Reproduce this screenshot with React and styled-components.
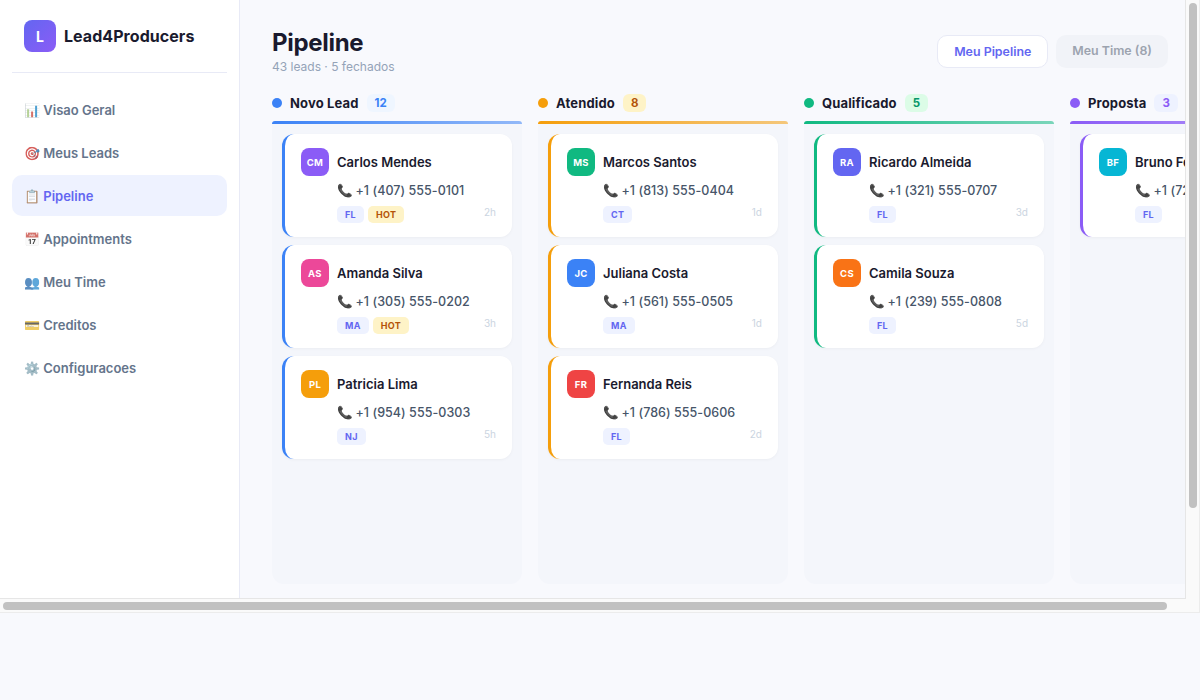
import React from "react";
import styled, { createGlobalStyle } from "styled-components";

const Global = createGlobalStyle`
  html, body { margin: 0; padding: 0; background: #f8f9fd; overflow: hidden; }
  * { box-sizing: border-box; }
  body { font-family: Inter, "Noto Sans", sans-serif; }
`;

const Frame = styled.div`
  width: 1200px;
  height: 613px;
  display: grid;
  grid-template-columns: 1186px 14px;
  grid-template-rows: 599px 14px;
  background: #fafafa;
  border-right: 1px solid #ececec;
  border-bottom: 1px solid #ececec;
`;
const Viewport = styled.div`
  overflow: hidden;
  border-right: 1px solid #e6e6e6;
  border-bottom: 1px solid #e6e6e6;
`;
const VTrack = styled.div`
  padding: 3px 2px 0 3px;
`;
const VThumb = styled.div`
  width: 8px;
  height: 505px;
  border-radius: 4px;
  background: #c1c1c1;
`;
const HTrack = styled.div`
  padding: 3px 0 0 3px;
`;
const HThumb = styled.div`
  width: 1164px;
  height: 8px;
  border-radius: 4px;
  background: #c1c1c1;
`;
const Shell = styled.div`
  display: flex;
  width: 1200px;
  height: 700px;
  background: #f8f9fd;
`;
const Sidebar = styled.aside`
  width: 240px;
  flex: none;
  background: #fff;
  border-right: 1px solid #e8eaf6;
  padding: 20px 12px;
`;
const Brand = styled.div`
  display: flex;
  align-items: center;
  gap: 8px;
  padding: 0 12px 20px;
  border-bottom: 1px solid #e8eaf6;
  margin-bottom: 16px;
`;
const Logo = styled.div`
  width: 32px;
  height: 32px;
  border-radius: 8px;
  background: linear-gradient(135deg, #6366f1, #8b5cf6);
  color: #fff;
  font-size: 14px;
  font-weight: 700;
  display: flex;
  align-items: center;
  justify-content: center;
`;
const BrandName = styled.div`
  font-size: 16px;
  font-weight: 700;
  letter-spacing: 0.05px;
  color: #1a1a2e;
`;
const NavItem = styled.div`
  height: 41px;
  margin-bottom: 2px;
  padding: 0 12px;
  border-radius: 10px;
  display: flex;
  align-items: center;
  font-size: 13px;
  font-weight: 600;
  color: ${p => (p.$active ? "#6366f1" : "#64748b")};
  background: ${p => (p.$active ? "#eef2ff" : "transparent")};
`;
const NavIcon = styled.span`
  white-space: pre;
  filter: saturate(0.7);
  opacity: 0.8;
`;
const Main = styled.main`
  flex: 1;
  min-width: 0;
  overflow: hidden;
  padding: 28px 32px;
`;
const Header = styled.header`
  display: flex;
  justify-content: space-between;
  align-items: flex-start;
  margin-bottom: 20px;
`;
const Title = styled.h1`
  margin: 0;
  font-size: 24px;
  line-height: 29px;
  font-weight: 700;
  letter-spacing: -0.3px;
  color: #1a1a2e;
`;
const Sub = styled.div`
  margin-top: 2px;
  font-size: 12px;
  color: #94a3b8;
`;
const Toggle = styled.div`
  display: flex;
  gap: 8px;
  margin-top: 7px;
`;
const ToggleBtn = styled.div`
  padding: 8px 16px;
  border-radius: 10px;
  font-size: 12.4px;
  line-height: 15px;
  font-weight: 600;
  background: ${p => (p.$active ? "#fff" : "#f1f3f8")};
  color: ${p => (p.$active ? "#6366f1" : "#9ca3af")};
  border: ${p => (p.$active ? "1px solid #e8eaf6" : "none")};
`;
const Board = styled.div`
  display: flex;
  gap: 16px;
`;
const Column = styled.section`
  width: 250px;
  flex: none;
`;
const ColHead = styled.div`
  display: flex;
  align-items: center;
  height: 18px;
  margin-bottom: 9px;
`;
const Dot = styled.span`
  width: 10px;
  height: 10px;
  border-radius: 50%;
  background: ${p => p.$c};
  margin-right: 8px;
`;
const ColName = styled.span`
  font-size: 13px;
  font-weight: 700;
  letter-spacing: 0.15px;
  color: #1a1a2e;
  margin-right: 8px;
`;
const Count = styled.span`
  font-size: 11.5px;
  font-weight: 700;
  line-height: 18px;
  padding: 0 8px;
  border-radius: 6px;
  color: ${p => p.$c};
  background: ${p => p.$bg};
`;
const Lane = styled.div`
  height: 463px;
  background: #f4f6fb;
  border-radius: 3px 3px 12px 12px;
  position: relative;
  padding: 13px 10px;
  display: flex;
  flex-direction: column;
  gap: 8px;
`;
const LaneBar = styled.div`
  position: absolute;
  left: 0; right: 0; top: 0;
  height: 3px;
  border-radius: 3px 3px 0 0;
  background: linear-gradient(90deg, ${p => p.$c}, ${p => p.$c}88);
`;
const Card = styled.article`
  height: 103px;
  background: #fff;
  border-radius: 12px;
  border-left: 3px solid ${p => p.$c};
  box-shadow: 0 1px 3px rgba(0,0,0,0.04);
  padding: 14px 16px;
  display: flex;
  flex-direction: column;
`;
const Person = styled.div`
  display: flex;
  align-items: center;
  gap: 8px;
  margin-bottom: 7px;
`;
const Avatar = styled.div`
  width: 28px;
  height: 28px;
  border-radius: 8px;
  background: ${p => p.$c};
  color: #fff;
  font-size: 9.5px;
  font-weight: 700;
  letter-spacing: 0.3px;
  display: flex;
  align-items: center;
  justify-content: center;
`;
const Name = styled.div`
  font-size: 13px;
  font-weight: 600;
  color: #1a1a2e;
  white-space: nowrap;
`;
const Phone = styled.div`
  margin-left: 36px;
  font-size: 12.5px;
  line-height: 16px;
  font-weight: 500;
  letter-spacing: 0.05px;
  color: #475569;
  white-space: nowrap;
`;
const PhoneIcon = styled.span`
  margin-right: -1px;
`;
const Foot = styled.div`
  margin-left: 36px;
  margin-top: 7px;
  display: flex;
  align-items: center;
  gap: 4px;
`;
const Tag = styled.span`
  font-size: 9px;
  font-weight: 700;
  line-height: 17px;
  padding: 0 8px;
  border-radius: 5px;
  letter-spacing: 0.3px;
  color: ${p => (p.$hot ? "#b45309" : "#6366f1")};
  background: ${p => (p.$hot ? "#fef3c7" : "#eef2ff")};
`;
const Age = styled.span`
  margin-left: auto;
  font-size: 10px;
  color: #cbd5e1;
  position: relative;
  top: -3px;
`;

const nav = [
  ["📊", "Visao Geral"], ["🎯", "Meus Leads"], ["📋", "Pipeline", true],
  ["📅", "Appointments"], ["👥", "Meu Time"], ["💳", "Creditos"], ["⚙️", "Configuracoes"],
];
const cols = [
  { name: "Novo Lead", c: "#3b82f6", bg: "#eff6ff", n: 12, cards: [
    ["CM", "#8b5cf6", "Carlos Mendes", "(407) 555-0101", "FL", true, "2h"],
    ["AS", "#ec4899", "Amanda Silva", "(305) 555-0202", "MA", true, "3h"],
    ["PL", "#f59e0b", "Patricia Lima", "(954) 555-0303", "NJ", false, "5h"],
  ]},
  { name: "Atendido", c: "#f59e0b", bg: "#fef3c7", cc: "#b45309", n: 8, cards: [
    ["MS", "#10b981", "Marcos Santos", "(813) 555-0404", "CT", false, "1d"],
    ["JC", "#3b82f6", "Juliana Costa", "(561) 555-0505", "MA", false, "1d"],
    ["FR", "#ef4444", "Fernanda Reis", "(786) 555-0606", "FL", false, "2d"],
  ]},
  { name: "Qualificado", c: "#10b981", bg: "#dcfce7", cc: "#059669", n: 5, cards: [
    ["RA", "#6366f1", "Ricardo Almeida", "(321) 555-0707", "FL", false, "3d"],
    ["CS", "#f97316", "Camila Souza", "(239) 555-0808", "FL", false, "5d"],
  ]},
  { name: "Proposta", c: "#8b5cf6", bg: "#eef2ff", n: 3, cards: [
    ["BF", "#06b6d4", "Bruno Ferreira", "(727) 555-0909", "FL", false, "1d"],
  ]},
];

export default function App() {
  return (
    <>
      <Global />
      <Frame>
        <Viewport>
          <Shell>
            <Sidebar>
              <Brand><Logo>L</Logo><BrandName>Lead4Producers</BrandName></Brand>
              {nav.map(([i, l, a]) => (
                <NavItem key={l} $active={a}><NavIcon>{i} </NavIcon>{l}</NavItem>
              ))}
            </Sidebar>
            <Main>
              <Header>
                <div>
                  <Title>Pipeline</Title>
                  <Sub>43 leads · 5 fechados</Sub>
                </div>
                <Toggle>
                  <ToggleBtn $active>Meu Pipeline</ToggleBtn>
                  <ToggleBtn>Meu Time (8)</ToggleBtn>
                </Toggle>
              </Header>
              <Board>
                {cols.map(col => (
                  <Column key={col.name}>
                    <ColHead>
                      <Dot $c={col.c} />
                      <ColName>{col.name}</ColName>
                      <Count $c={col.cc || col.c} $bg={col.bg}>{col.n}</Count>
                    </ColHead>
                    <Lane>
                      <LaneBar $c={col.c} />
                      {col.cards.map(([ini, ac, name, ph, st, hot, age]) => (
                        <Card key={name} $c={col.c}>
                          <Person><Avatar $c={ac}>{ini}</Avatar><Name>{name}</Name></Person>
                          <Phone><PhoneIcon>📞</PhoneIcon> +1 {ph}</Phone>
                          <Foot>
                            <Tag>{st}</Tag>
                            {hot && <Tag $hot>HOT</Tag>}
                            <Age>{age}</Age>
                          </Foot>
                        </Card>
                      ))}
                    </Lane>
                  </Column>
                ))}
              </Board>
            </Main>
          </Shell>
        </Viewport>
        <VTrack><VThumb /></VTrack>
        <HTrack><HThumb /></HTrack>
      </Frame>
    </>
  );
}
